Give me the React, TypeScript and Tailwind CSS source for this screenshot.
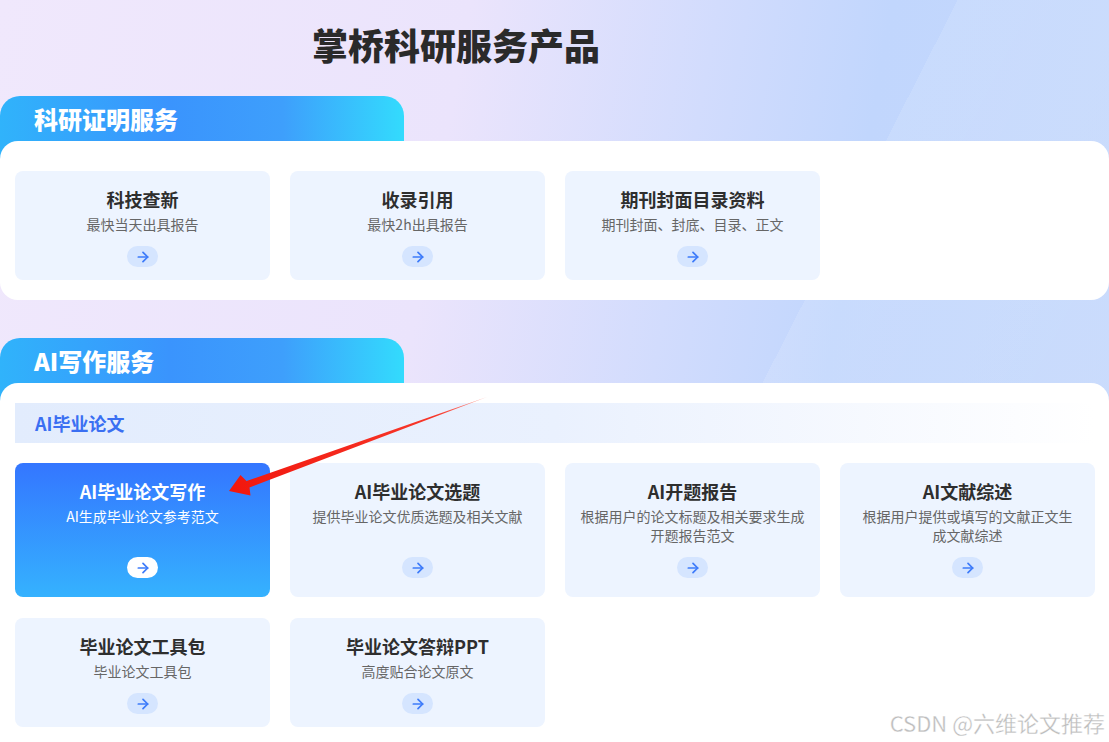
import React from 'react';
import { ArrowRight } from 'lucide-react';

type Item = { title: string; desc: string; active?: boolean };

const proofItems: Item[] = [
  { title: '科技查新', desc: '最快当天出具报告' },
  { title: '收录引用', desc: '最快2h出具报告' },
  { title: '期刊封面目录资料', desc: '期刊封面、封底、目录、正文' },
];

const aiRowOne: Item[] = [
  { title: 'AI毕业论文写作', desc: 'AI生成毕业论文参考范文', active: true },
  { title: 'AI毕业论文选题', desc: '提供毕业论文优质选题及相关文献' },
  { title: 'AI开题报告', desc: '根据用户的论文标题及相关要求生成\n开题报告范文' },
  { title: 'AI文献综述', desc: '根据用户提供或填写的文献正文生\n成文献综述' },
];

const aiRowTwo: Item[] = [
  { title: '毕业论文工具包', desc: '毕业论文工具包' },
  { title: '毕业论文答辩PPT', desc: '高度贴合论文原文' },
];

function ServiceCard({ item, tall }: { item: Item; tall?: boolean }) {
  return (
    <div
      className={
        'flex flex-col items-center rounded-[8px] px-2 pt-4 text-center ' +
        (tall ? 'h-[134px] ' : 'h-[109px] ') +
        (item.active
          ? 'bg-[linear-gradient(180deg,#3476ff_0%,#35b2fe_100%)]'
          : 'bg-[#edf4ff]')
      }
    >
      <div
        className={
          'text-[18px] leading-6 font-bold ' + (item.active ? 'text-white' : 'text-[#2e2e2e]')
        }
      >
        {item.title}
      </div>
      <div
        className={
          'mt-1 text-[14px] leading-[19px] whitespace-pre-line ' +
          (tall ? 'min-h-[38px] ' : '') +
          (item.active ? 'text-white' : 'text-[#666666]')
        }
      >
        {item.desc}
      </div>
      <div
        className={
          'mt-3 flex h-[21px] w-[31px] items-center justify-center rounded-full ' +
          (item.active ? 'bg-white' : 'bg-[#d5e5ff]')
        }
      >
        <ArrowRight size={16} strokeWidth={2.6} className="text-[#3d7bfa]" />
      </div>
    </div>
  );
}

function SectionTab({ label }: { label: string }) {
  return (
    <div className="h-[64px] w-[404px] rounded-t-[20px] bg-[linear-gradient(90deg,#30b3fb_0%,#3a94fd_42%,#3e9ffc_70%,#33dbfd_100%)]">
      <div className="h-[45px] pl-[34px] text-[24px] leading-[45px] font-black text-white">{label}</div>
    </div>
  );
}

export default function App() {
  return (
    <div
      className="relative h-[742px] w-full overflow-hidden bg-[linear-gradient(100deg,#f0e8fc_0%,#ebe4fc_38%,#d2dcfd_58%,#c1d6fd_72%,#c6d9fc_100%)]"
      style={{ fontFamily: '"Noto Sans CJK SC", "Noto Sans", sans-serif' }}
    >
      {/* soft diagonal light band */}
      <div className="pointer-events-none absolute inset-0 bg-[linear-gradient(117deg,transparent_0%,transparent_64.4%,rgba(255,255,255,0.12)_64.4%,rgba(255,255,255,0.06)_100%)]" />

      <div className="relative">
        <h1 className="pt-6 pl-[312px] text-[36px] leading-10 font-black text-[#2a2a2a]">
          掌桥科研服务产品
        </h1>

        <div className="mt-8">
          <SectionTab label="科研证明服务" />
          <div className="relative -mt-[19px] rounded-[18px] bg-white px-[15px] pt-[30px] pb-5">
            <div className="grid grid-cols-[repeat(4,255px)] gap-x-5">
              {proofItems.map(item => (
                <ServiceCard key={item.title} item={item} />
              ))}
            </div>
          </div>
        </div>

        <div className="mt-[38px]">
          <SectionTab label="AI写作服务" />
          <div className="relative -mt-[19px] rounded-[18px] bg-white px-[15px] pt-5 pb-10">
            <div className="h-10 bg-[linear-gradient(90deg,#e2ecfd_0%,#eaf1fe_50%,#ffffff_100%)] pl-5 text-[18px] leading-10 font-bold text-[#3a6ff2]">
              AI毕业论文
            </div>
            <div className="mt-5 grid grid-cols-[repeat(4,255px)] gap-x-5 gap-y-[21px]">
              {aiRowOne.map(item => (
                <ServiceCard key={item.title} item={item} tall />
              ))}
              {aiRowTwo.map(item => (
                <ServiceCard key={item.title} item={item} />
              ))}
            </div>
          </div>
        </div>
      </div>

      {/* red annotation arrow */}
      <svg
        className="pointer-events-none absolute top-0 left-0"
        width="1109"
        height="742"
        viewBox="0 0 1109 742"
      >
        <defs>
          <linearGradient id="redArrow" x1="487" y1="397" x2="229" y2="491" gradientUnits="userSpaceOnUse">
            <stop offset="0" stopColor="#ff9a90" />
            <stop offset="0.2" stopColor="#f7372a" />
            <stop offset="1" stopColor="#f2170d" />
          </linearGradient>
        </defs>
        <polygon
          points="487,397 246.5,481 240.5,475 229,491 250.5,495.5 249.5,487.5"
          fill="url(#redArrow)"
        />
      </svg>

      {/* watermark */}
      <div
        className="absolute top-[706px] right-[4px] text-[22px] leading-8 text-[#bdbdbd]"
        style={{ WebkitTextStroke: '0.3px #ffffff' }}
      >
        CSDN @六维论文推荐
      </div>
    </div>
  );
}
